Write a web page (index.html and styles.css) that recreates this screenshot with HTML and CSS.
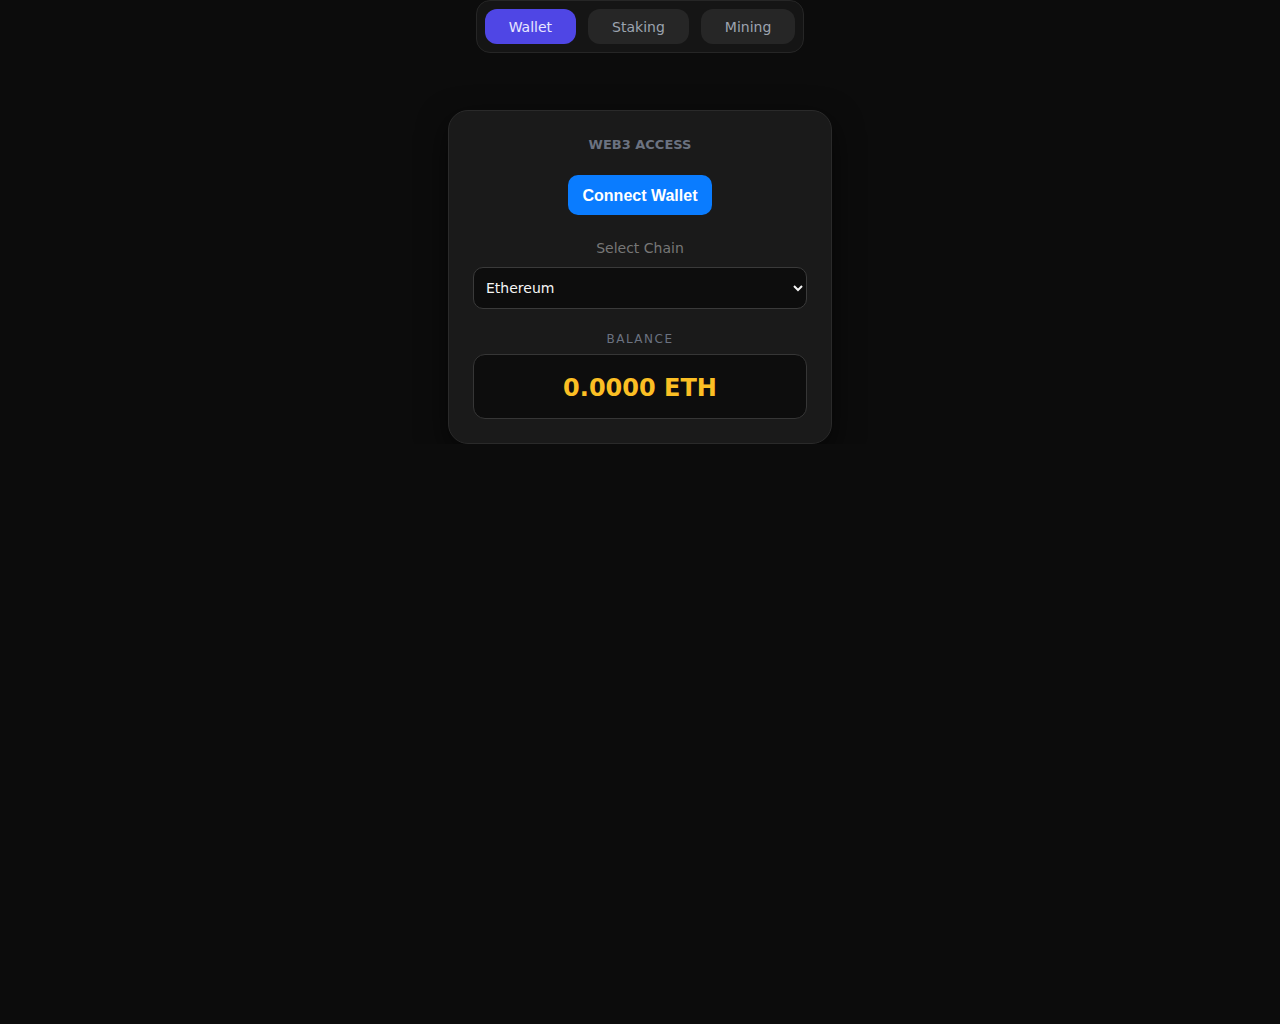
FILE: index.html
```html
<!DOCTYPE html>
<html lang="en">
<head>
<meta charset="utf-8">
<title>Web3 Access</title>
<link rel="stylesheet" href="styles.css">
</head>
<body>
<div class="page">
  <nav class="tabs">
    <button class="tab active">Wallet</button>
    <button class="tab">Staking</button>
    <button class="tab">Mining</button>
  </nav>
  <section class="card">
    <h2 class="title">WEB3 ACCESS</h2>
    <button class="connect">Connect Wallet</button>
    <label class="label" for="chain">Select Chain</label>
    <select id="chain" class="chain">
      <option>Ethereum</option>
      <option>Polygon</option>
      <option>BNB Chain</option>
    </select>
    <div class="balance-label">BALANCE</div>
    <div class="balance">0.0000 ETH</div>
  </section>
</div>
</body>
</html>
```
FILE: styles.css
```css
html, body {
  margin: 0;
  padding: 0;
  background: #0c0c0c;
  font-family: "DejaVu Sans", sans-serif;
  color: #e5e5e5;
}
.page {
  display: flex;
  flex-direction: column;
  align-items: center;
}
.tabs {
  display: flex;
  gap: 12px;
  padding: 8px;
  background: #151515;
  border: 1px solid #262626;
  border-radius: 14px;
}
.tab {
  font-family: "DejaVu Sans", sans-serif;
  font-size: 14px;
  height: 35px;
  padding: 0 24px;
  border: none;
  border-radius: 12px;
  background: #262626;
  color: #9ca3af;
  cursor: pointer;
}
.tab.active {
  background: #4f46e5;
  color: #e8e7ff;
}
.card {
  margin-top: 57px;
  width: 334px;
  padding: 24px;
  background: #1a1a1a;
  border: 1px solid #2a2a2a;
  border-radius: 20px;
  box-shadow: 0 10px 30px rgba(0,0,0,0.6);
  display: flex;
  flex-direction: column;
  align-items: center;
}
.title {
  margin: 0;
  font-size: 13px;
  line-height: 20px;
  font-weight: bold;
  color: #6b7280;
}
.connect {
  margin-top: 20px;
  font-family: "Liberation Sans", Arial, sans-serif;
  font-weight: bold;
  font-size: 16px;
  height: 40px;
  padding: 2px 15px 0;
  border: none;
  border-radius: 10px;
  background: #0a7cff;
  color: #ffffff;
  cursor: pointer;
}
.label {
  margin-top: 24px;
  font-size: 14px;
  line-height: 18px;
  color: #777777;
}
.chain {
  margin-top: 10px;
  width: 100%;
  height: 42px;
  padding: 0 6px 0 8px;
  box-sizing: border-box;
  font-family: "DejaVu Sans", sans-serif;
  font-size: 14px;
  color: #f5f5f5;
  background: #0d0d0d;
  border: 1px solid #3a3a3a;
  border-radius: 10px;
  color-scheme: dark;
}
.balance-label {
  margin-top: 23px;
  font-size: 12px;
  line-height: 14px;
  letter-spacing: 1.5px;
  color: #6b7280;
}
.balance {
  margin-top: 8px;
  width: 100%;
  box-sizing: border-box;
  height: 65px;
  padding-top: 2px;
  display: flex;
  align-items: center;
  justify-content: center;
  background: #0d0d0d;
  border: 1px solid #363636;
  border-radius: 12px;
  font-size: 24px;
  font-weight: bold;
  color: #fbbf24;
}
```
